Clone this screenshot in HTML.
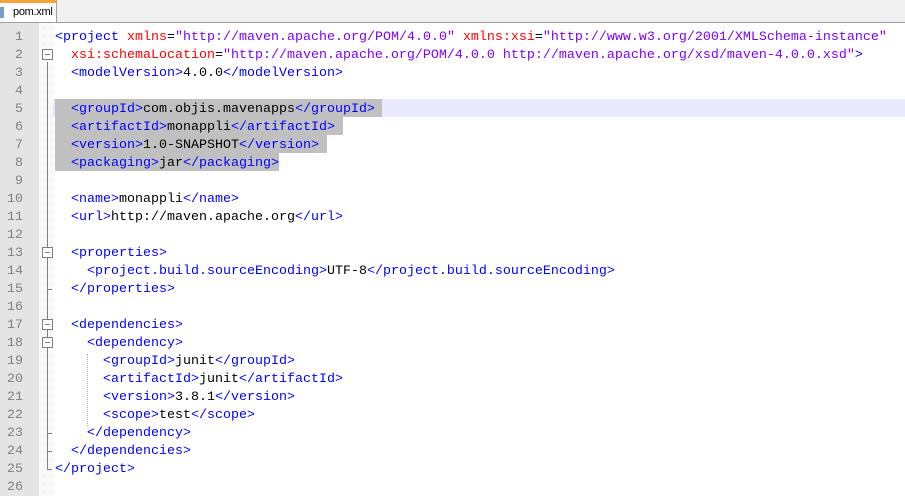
<!DOCTYPE html>
<html><head><style>
*{margin:0;padding:0}
body{width:905px;height:496px;overflow:hidden;background:#fff;position:relative;font-family:"Liberation Mono",monospace;}
#tabbar{position:absolute;left:0;top:0;width:905px;height:22px;background:#f0f0f0;border-bottom:1px solid #a0a0a0;}
#tab{position:absolute;left:0;top:0;width:57px;height:22px;background:#fff;border-right:1px solid #a0a0a0;border-top:3px solid #f8a33a;box-sizing:border-box;font-family:"Liberation Sans",sans-serif;font-size:11px;line-height:18px;padding-left:13px;letter-spacing:-0.3px}
#tab i{position:absolute;left:0;top:4px;width:4px;height:11px;background:#7a9cc8}
#gut{position:absolute;left:0;top:23px;width:39px;height:473px;background:#e4e4e4}
#fold{position:absolute;left:39px;top:23px;width:14px;height:473px;background:repeating-conic-gradient(#f4f4f4 0 25%,#fff 0 50%) 0 0/2px 2px}
.r{position:absolute;left:0;height:18px;width:905px;font-size:13.33px;line-height:18px;white-space:pre;padding-top:2px;box-sizing:border-box}
.n{position:absolute;left:0;width:23px;text-align:right;color:#808080}
.c{position:absolute;left:55px}
.t{color:#0000ff}.a{color:#ff0000}.v{color:#8000ff}.x{color:#000}
.box{position:absolute;left:42px;width:9px;height:9px;border:1px solid #808080;background:#fff}
.box:after{content:"";position:absolute;left:2px;top:4px;width:5px;height:1px;background:#808080}
.vl{position:absolute;left:47px;width:1px;background:#808080}
.tk{position:absolute;left:47px;width:5px;height:1px;background:#808080}
.sel{position:absolute;left:55px;height:18px;background:#c0c0c0}
.dg{position:absolute;width:0;border-left:1px dotted #b0b0b0}
</style></head><body>
<div id="tabbar"><div id="tab"><i></i>pom.xml</div></div>
<div id="gut"></div><div id="fold"></div>
<div style="position:absolute;left:53px;top:99px;width:852px;height:18px;background:#e8e8ff"></div>
<div class="sel" style="top:99px;width:327px"></div>
<div class="sel" style="top:117px;width:288px"></div>
<div class="sel" style="top:135px;width:272px"></div>
<div class="sel" style="top:153px;width:224px"></div>
<div class="vl" style="top:62px;height:408px"></div>
<div class="box" style="top:49px"></div>
<div class="box" style="top:247px"></div>
<div class="box" style="top:319px"></div>
<div class="box" style="top:337px"></div>
<div class="tk" style="top:289px"></div>
<div class="tk" style="top:433px"></div>
<div class="tk" style="top:451px"></div>
<div class="tk" style="top:469px"></div>
<div class="dg" style="left:87px;top:354px;height:72px"></div>
<div class="r" style="top:27px"><span class="n">1</span><span class="c"><span class="t">&lt;project</span> <span class="a">xmlns</span>=<span class="v">"http://maven.apache.org/POM/4.0.0"</span> <span class="a">xmlns:xsi</span>=<span class="v">"http://www.w3.org/2001/XMLSchema-instance"</span></span></div>
<div class="r" style="top:45px"><span class="n">2</span><span class="c">  <span class="a">xsi:schemaLocation</span>=<span class="v">"http://maven.apache.org/POM/4.0.0 http://maven.apache.org/xsd/maven-4.0.0.xsd"</span><span class="t">&gt;</span></span></div>
<div class="r" style="top:63px"><span class="n">3</span><span class="c">  <span class="t">&lt;modelVersion&gt;</span>4.0.0<span class="t">&lt;/modelVersion&gt;</span></span></div>
<div class="r" style="top:81px"><span class="n">4</span></div>
<div class="r" style="top:99px"><span class="n">5</span><span class="c">  <span class="t">&lt;groupId&gt;</span>com.objis.mavenapps<span class="t">&lt;/groupId&gt;</span></span></div>
<div class="r" style="top:117px"><span class="n">6</span><span class="c">  <span class="t">&lt;artifactId&gt;</span>monappli<span class="t">&lt;/artifactId&gt;</span></span></div>
<div class="r" style="top:135px"><span class="n">7</span><span class="c">  <span class="t">&lt;version&gt;</span>1.0-SNAPSHOT<span class="t">&lt;/version&gt;</span></span></div>
<div class="r" style="top:153px"><span class="n">8</span><span class="c">  <span class="t">&lt;packaging&gt;</span>jar<span class="t">&lt;/packaging&gt;</span></span></div>
<div class="r" style="top:171px"><span class="n">9</span></div>
<div class="r" style="top:189px"><span class="n">10</span><span class="c">  <span class="t">&lt;name&gt;</span>monappli<span class="t">&lt;/name&gt;</span></span></div>
<div class="r" style="top:207px"><span class="n">11</span><span class="c">  <span class="t">&lt;url&gt;</span>http://maven.apache.org<span class="t">&lt;/url&gt;</span></span></div>
<div class="r" style="top:225px"><span class="n">12</span></div>
<div class="r" style="top:243px"><span class="n">13</span><span class="c">  <span class="t">&lt;properties&gt;</span></span></div>
<div class="r" style="top:261px"><span class="n">14</span><span class="c">    <span class="t">&lt;project.build.sourceEncoding&gt;</span>UTF-8<span class="t">&lt;/project.build.sourceEncoding&gt;</span></span></div>
<div class="r" style="top:279px"><span class="n">15</span><span class="c">  <span class="t">&lt;/properties&gt;</span></span></div>
<div class="r" style="top:297px"><span class="n">16</span></div>
<div class="r" style="top:315px"><span class="n">17</span><span class="c">  <span class="t">&lt;dependencies&gt;</span></span></div>
<div class="r" style="top:333px"><span class="n">18</span><span class="c">    <span class="t">&lt;dependency&gt;</span></span></div>
<div class="r" style="top:351px"><span class="n">19</span><span class="c">      <span class="t">&lt;groupId&gt;</span>junit<span class="t">&lt;/groupId&gt;</span></span></div>
<div class="r" style="top:369px"><span class="n">20</span><span class="c">      <span class="t">&lt;artifactId&gt;</span>junit<span class="t">&lt;/artifactId&gt;</span></span></div>
<div class="r" style="top:387px"><span class="n">21</span><span class="c">      <span class="t">&lt;version&gt;</span>3.8.1<span class="t">&lt;/version&gt;</span></span></div>
<div class="r" style="top:405px"><span class="n">22</span><span class="c">      <span class="t">&lt;scope&gt;</span>test<span class="t">&lt;/scope&gt;</span></span></div>
<div class="r" style="top:423px"><span class="n">23</span><span class="c">    <span class="t">&lt;/dependency&gt;</span></span></div>
<div class="r" style="top:441px"><span class="n">24</span><span class="c">  <span class="t">&lt;/dependencies&gt;</span></span></div>
<div class="r" style="top:459px"><span class="n">25</span><span class="c"><span class="t">&lt;/project&gt;</span></span></div>
<div class="r" style="top:477px"><span class="n">26</span></div>
</body></html>
